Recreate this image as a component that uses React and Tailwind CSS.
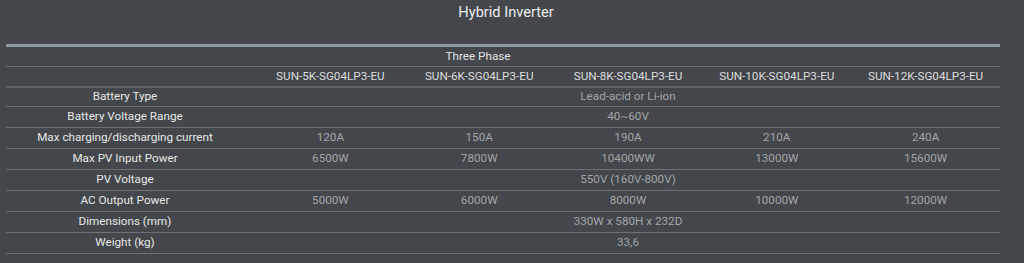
import React from 'react';

// Spec sheet: three phase hybrid inverters
const MODELS = ['SUN-5K-SG04LP3-EU', 'SUN-6K-SG04LP3-EU', 'SUN-8K-SG04LP3-EU', 'SUN-10K-SG04LP3-EU', 'SUN-12K-SG04LP3-EU'];

const ROWS = [
    { label: 'Battery Type', span: 'Lead-acid or Li-ion' },
    { label: 'Battery Voltage Range', span: '40~60V' },
    { label: 'Max charging/discharging current', values: ['120A', '150A', '190A', '210A', '240A'] },
    { label: 'Max PV Input Power', values: ['6500W', '7800W', '10400WW', '13000W', '15600W'] },
    { label: 'PV Voltage', span: '550V (160V-800V)' },
    { label: 'AC Output Power', values: ['5000W', '6000W', '8000W', '10000W', '12000W'] },
    { label: 'Dimensions (mm)', span: '330W x 580H x 232D' },
    { label: 'Weight (kg)', span: '33,6' },
];

export default function App() {
    return (
        <div className="w-[1024px] h-[263px] bg-[#43464a] overflow-hidden" style={{ fontFamily: 'Roboto, "Liberation Sans", sans-serif' }}>
            {/* Title */}
            <div className="w-[1012px] h-[44px] pt-[2px] text-center text-[14.6px] leading-[20px] text-[#ececec]">
                Hybrid Inverter
            </div>

            {/* Table */}
            <div className="ml-[6px] w-[994px] border-t-[3px] border-[#8e9aa3] text-[11.7px]">
                <div className="h-[20px] flex items-center justify-center pr-[50px] border-b border-[#6b7075] text-[#e2e2e2]">
                    Three Phase
                </div>

                <div className="grid grid-cols-[250px_repeat(5,1fr)] h-[21px] items-center border-b-2 border-[#5c6166] text-[#dcdcdc]">
                    <div />
                    {MODELS.map((m) => (
                        <div key={m} className="text-center">{m}</div>
                    ))}
                </div>

                {ROWS.map((row, i) => (
                    <div
                        key={row.label}
                        className={`grid grid-cols-[250px_repeat(5,1fr)] items-center border-b border-[#6b7075] ${i === 0 ? 'h-[19px]' : 'h-[21px]'}`}
                    >
                        <div className="text-center pr-[12px] text-[#e6e6e6]">{row.label}</div>
                        {row.span ? (
                            <div className="col-span-5 text-center text-[#a2a5a8]">{row.span}</div>
                        ) : (
                            row.values.map((v, j) => (
                                <div key={j} className="text-center text-[#a2a5a8]">{v}</div>
                            ))
                        )}
                    </div>
                ))}
            </div>
        </div>
    );
}
